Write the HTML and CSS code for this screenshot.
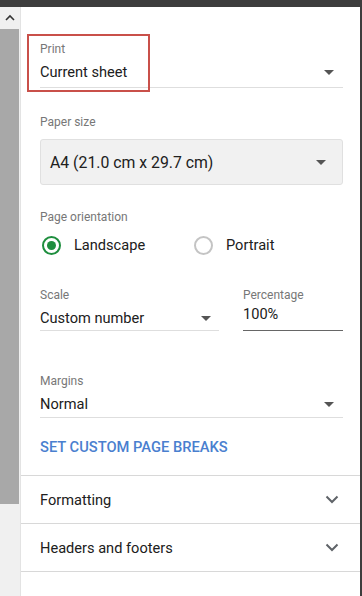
FILE: index.html
```html
<!DOCTYPE html>
<html>
<head>
<meta charset="utf-8">
<link rel="stylesheet" href="styles.css">
</head>
<body>
<div class="frame">
  <div class="topbar"></div>
  <div class="main">
    <div class="scrollbar">
      <div class="sb-up">
        <svg width="12" height="8" viewBox="0 0 12 8"><path d="M2 6 L6 2 L10 6" fill="none" stroke="#333" stroke-width="1.6"/></svg>
      </div>
      <div class="sb-thumb"></div>
      <div class="sb-track"></div>
    </div>
    <div class="panel">
      <div class="highlight"></div>
      <div class="field f-print">
        <div class="label">Print</div>
        <div class="select">
          <span>Current sheet</span>
          <span class="tri"></span>
        </div>
      </div>

      <div class="field f-paper">
        <div class="label">Paper size</div>
        <div class="boxselect">
          <span>A4 (21.0 cm x 29.7 cm)</span>
          <span class="tri"></span>
        </div>
      </div>

      <div class="field f-orient">
        <div class="label">Page orientation</div>
        <div class="radios">
          <div class="radio-opt first">
            <span class="radio on"><span class="dot"></span></span>
            <span>Landscape</span>
          </div>
          <div class="radio-opt">
            <span class="radio"></span>
            <span>Portrait</span>
          </div>
        </div>
      </div>

      <div class="scale-row">
        <div class="field col-scale">
          <div class="label">Scale</div>
          <div class="select s-scale">
            <span>Custom number</span>
            <span class="tri"></span>
          </div>
        </div>
        <div class="field col-pct">
          <div class="label">Percentage</div>
          <div class="input">100%</div>
        </div>
      </div>

      <div class="field f-margins">
        <div class="label">Margins</div>
        <div class="select s-margins">
          <span>Normal</span>
          <span class="tri"></span>
        </div>
      </div>

      <div class="link">SET CUSTOM PAGE BREAKS</div>

      <div class="accordion">
        <div class="acc-row">
          <span>Formatting</span>
          <svg class="chev" width="14" height="9" viewBox="0 0 14 9"><path d="M1.5 1.5 L7 7 L12.5 1.5" fill="none" stroke="#5f6368" stroke-width="2"/></svg>
        </div>
        <div class="acc-row">
          <span>Headers and footers</span>
          <svg class="chev" width="14" height="9" viewBox="0 0 14 9"><path d="M1.5 1.5 L7 7 L12.5 1.5" fill="none" stroke="#5f6368" stroke-width="2"/></svg>
        </div>
      </div>
    </div>
    <div class="rightedge"></div>
  </div>
</div>
</body>
</html>
```

FILE: styles.css
```css
html, body {
  margin: 0;
  padding: 0;
  width: 362px;
  height: 596px;
  overflow: hidden;
  background: #fff;
  font-family: Roboto, "Liberation Sans", Arial, sans-serif;
  color: #212121;
}

.frame {
  display: flex;
  flex-direction: column;
  height: 596px;
}

.topbar {
  height: 7px;
  background: #3d3d3d;
  flex: none;
}

.main {
  flex: 1;
  display: flex;
  min-height: 0;
}

.scrollbar {
  width: 20px;
  flex: none;
  display: flex;
  flex-direction: column;
  background: #f0f0f0;
  border-right: 1px solid #e3e3e3;
}

.sb-up {
  height: 22px;
  display: flex;
  align-items: center;
  justify-content: center;
  flex: none;
}

.sb-thumb {
  height: 475px;
  background: #a8a8a8;
  flex: none;
  margin-right: 1px;
}

.sb-track {
  flex: 1;
  background: #f0f0f0;
}

.rightedge {
  width: 2px;
  flex: none;
  background: #3d3d3d;
}

.panel {
  flex: 1;
  min-width: 0;
  position: relative;
  display: flex;
  flex-direction: column;
}

.highlight {
  position: absolute;
  left: 6px;
  top: 27px;
  width: 119px;
  height: 54px;
  border: 2px solid #c9504a;
}

.field {
  display: flex;
  flex-direction: column;
  margin-left: 19px;
  margin-right: 17px;
  min-width: 0;
}

.label {
  font-size: 12px;
  line-height: 14px;
  color: #777;
}

.select {
  display: flex;
  align-items: flex-start;
  justify-content: space-between;
  font-size: 14.6px;
  line-height: 20px;
  border-bottom: 1px solid #dedede;
  color: #202020;
}

.tri {
  width: 0;
  height: 0;
  border-left: 5px solid transparent;
  border-right: 5px solid transparent;
  border-top: 5px solid #555;
  margin-top: 8px;
  margin-right: 9px;
}

.f-print { margin-top: 35px; }
.f-print .select { margin-top: 6px; padding-bottom: 5px; }

.f-paper { margin-top: 27px; }
.boxselect {
  margin-top: 10px;
  height: 44px;
  background: #f1f1f1;
  border: 1px solid #e0e0e0;
  border-radius: 3px;
  display: flex;
  align-items: center;
  justify-content: space-between;
  padding: 0 16px 0 9px;
  font-size: 15.8px;
  color: #202020;
}
.boxselect .tri { margin: 0; }

.f-orient { margin-top: 25px; }
.radios {
  margin-top: 9px;
  height: 24px;
  display: flex;
  align-items: center;
}
.radio-opt {
  display: flex;
  align-items: center;
  gap: 13px;
  font-size: 14.6px;
  color: #202020;
}
.radio-opt.first {
  width: 152px;
  margin-left: 2px;
}
.radio {
  width: 15px;
  height: 15px;
  border: 2px solid #c4c4c4;
  border-radius: 50%;
  display: flex;
  align-items: center;
  justify-content: center;
  box-sizing: content-box;
}
.radio.on { border-color: #1e8e3e; }
.radio .dot {
  width: 9px;
  height: 9px;
  border-radius: 50%;
  background: #1e8e3e;
}

.scale-row {
  margin-top: 31px;
  display: flex;
  gap: 24px;
  margin-left: 19px;
  margin-right: 17px;
}
.scale-row .field { margin: 0; }
.col-scale { width: 179px; }
.col-pct { flex: 1; }
.s-scale { margin-top: 6px; padding-bottom: 2px; }
.s-scale .tri { margin-right: 8px; }
.input {
  margin-top: 2px;
  font-size: 14.6px;
  line-height: 20px;
  padding-bottom: 6px;
  border-bottom: 1px solid #666;
  color: #202020;
}

.f-margins { margin-top: 43px; }
.s-margins { margin-top: 6px; padding-bottom: 3px; }

.link {
  margin-top: 22px;
  margin-left: 19px;
  font-size: 14.7px;
  line-height: 14px;
  font-weight: 500;
  color: #4a7fcf;
}

.accordion {
  margin-top: 21px;
}
.acc-row {
  height: 47px;
  border-top: 1px solid #d8d8d8;
  display: flex;
  align-items: center;
  justify-content: space-between;
  padding-left: 19px;
  padding-right: 21px;
  font-size: 14.6px;
  color: #202020;
}
.acc-row:last-child {
  border-bottom: 1px solid #d8d8d8;
}
```
